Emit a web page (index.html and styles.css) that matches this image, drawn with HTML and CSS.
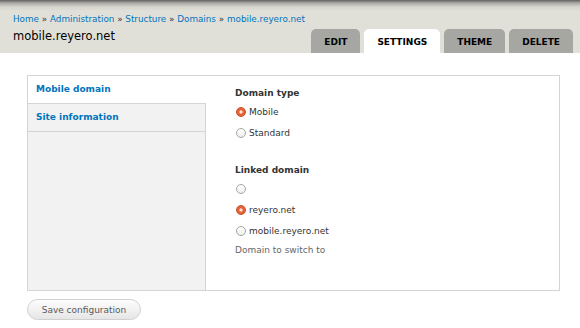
FILE: index.html
```html
<!DOCTYPE html>
<html lang="en">
<head>
    <meta charset="UTF-8">
    <meta name="viewport" content="width=device-width, initial-scale=1.0">
    <title>mobile.reyero.net</title>
    <link rel="stylesheet" href="styles.css">
</head>
<body>
    <div class="header">
        <div class="titles">
            <div class="breadcrumb">
                <a href="#">Home</a> » <a href="#">Administration</a> » <a href="#">Structure</a> » <a href="#">Domains</a> » <a href="#">mobile.reyero.net</a>
            </div>
            <h1 class="page-title">mobile.reyero.net</h1>
        </div>
        <ul class="tabs">
            <li><a href="#">Edit</a></li>
            <li class="active"><a href="#">Settings</a></li>
            <li><a href="#">Theme</a></li>
            <li><a href="#">Delete</a></li>
        </ul>
    </div>

    <div class="page">
        <form>
            <div class="vertical-tabs">
                <ul class="vtabs-list">
                    <li class="selected"><a href="#">Mobile domain</a></li>
                    <li><a href="#">Site information</a></li>
                </ul>
                <div class="vtabs-pane">
                    <div class="form-item">
                        <label class="form-label">Domain type</label>
                        <label class="option"><input type="radio" name="type" checked> Mobile</label>
                        <label class="option"><input type="radio" name="type"> Standard</label>
                    </div>

                    <div class="form-item linked">
                        <label class="form-label">Linked domain</label>
                        <label class="option"><input type="radio" name="linked"></label>
                        <label class="option"><input type="radio" name="linked" checked> reyero.net</label>
                        <label class="option"><input type="radio" name="linked"> mobile.reyero.net</label>
                        <div class="description">Domain to switch to</div>
                    </div>
                </div>
            </div>

            <button type="button" class="form-submit">Save configuration</button>
        </form>
    </div>
</body>
</html>
```

FILE: styles.css
```css
body {
    margin: 0;
    font-family: "DejaVu Sans", Verdana, sans-serif;
    font-size: 9px;
    color: #333;
    background-color: #fff;
}

a {
    color: #0074bd;
    text-decoration: none;
}

/* header with breadcrumb, title and primary tabs */
.header {
    display: flex;
    justify-content: space-between;
    align-items: flex-end;
    height: 53px;
    padding: 0 7px 0 13px;
    background: linear-gradient(to bottom, #5f5f5d 0, #a9a9a4 3px, #d6d6ce 7px, #e0e0d8 11px);
}

.titles {
    align-self: flex-start;
    padding-top: 13px;
}

.breadcrumb {
    font-size: 8.8px;
    line-height: 12px;
    color: #333;
}

.page-title {
    margin: 4px 0 0;
    font-size: 11.5px;
    font-weight: normal;
    line-height: 15px;
    color: #000;
}

.tabs {
    display: flex;
    gap: 4px;
    margin: 0;
    padding: 0;
    list-style: none;
}

.tabs li a {
    display: block;
    height: 24px;
    line-height: 26px;
    padding: 0 13px;
    background-color: #a6a7a2;
    border-radius: 5px 5px 0 0;
    color: #000;
    font-weight: bold;
    font-size: 9px;
    text-transform: uppercase;
}

.tabs li.active a {
    background-color: #fff;
}

/* page content */
.page {
    padding: 22px 20px 0 27px;
}

.vertical-tabs {
    display: flex;
    height: 214px;
    border: 1px solid #d4d4d4;
}

.vtabs-list {
    width: 177px;
    margin: 0;
    padding: 0;
    list-style: none;
    background-color: #f2f2f2;
    border-right: 1px solid #d4d4d4;
}

.vtabs-list li {
    border-bottom: 1px solid #d4d4d4;
}

.vtabs-list li a {
    display: block;
    height: 27px;
    line-height: 26px;
    padding-left: 8px;
    font-weight: bold;
}

.vtabs-list li.selected {
    margin-right: -1px;
    background-color: #fff;
}

.vtabs-pane {
    flex: 1;
    padding: 11px 0 0 29px;
}

.form-label {
    display: block;
    margin-bottom: 2px;
    font-weight: bold;
    line-height: 12px;
    color: #333;
}

.option {
    display: flex;
    align-items: center;
    height: 21px;
    color: #333;
}

.linked {
    margin-top: 21px;
}

input[type="radio"] {
    appearance: none;
    width: 10px;
    height: 10px;
    margin: 0 3px 0 1px;
    border: 1px solid #a4a4a0;
    border-radius: 50%;
    background: linear-gradient(#fff, #eeeeec);
}

input[type="radio"]:checked {
    border-color: #c74f24;
    background: radial-gradient(circle, #fbe4da 0, #fbe4da 1.2px, #e4643a 2px, #e4643a 100%);
}

.description {
    margin-top: 3px;
    line-height: 12px;
    color: #666;
}

.form-submit {
    margin-top: 8px;
    width: 114px;
    height: 21px;
    padding: 0;
    font-family: "DejaVu Sans", Verdana, sans-serif;
    font-size: 9px;
    color: #5a5a5a;
    background: linear-gradient(#fdfdfd, #e6e6e6);
    border: 1px solid #d0d0d0;
    border-radius: 11px;
    cursor: pointer;
}
```
